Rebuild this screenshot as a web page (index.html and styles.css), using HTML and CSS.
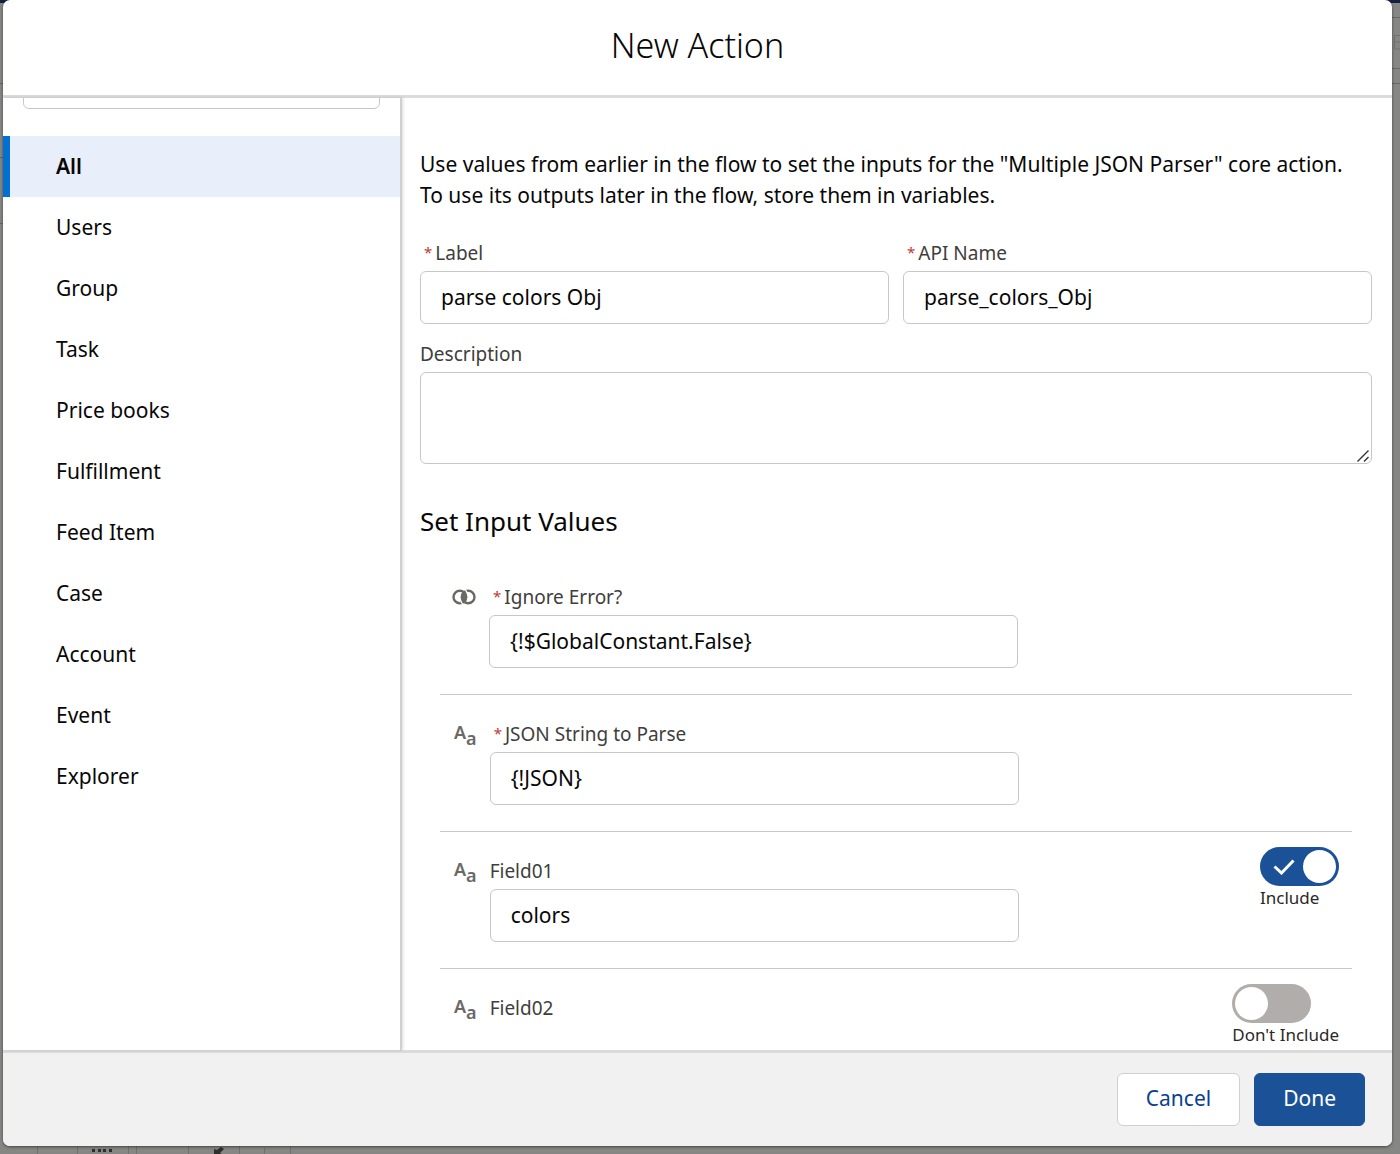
FILE: index.html
```html
<!DOCTYPE html>
<html lang="en">
<head>
    <meta charset="UTF-8">
    <meta name="viewport" content="width=device-width, initial-scale=1">
    <title>New Action</title>
    <link rel="stylesheet" href="styles.css">
</head>
<body>
    <!-- Dimmed flow builder behind the dialog -->
    <div class="backdrop" aria-hidden="true">
        <svg class="backdrop-left" width="4" height="240"><path d="M0 83.5h4M0 157.5h4M0 223.5h4" stroke="#666"/></svg>
        <svg class="backdrop-right" width="8" height="100"><path d="M0 17.5h8M0 68.5h8M0 83.5h8" stroke="#666"/><path d="M8 35.500H2.500V49H8M2.500 42H8" fill="none" stroke="#727271"/></svg>
        <svg class="backdrop-tools" width="300" height="10">
            <path d="M37.500 0v10M77.500 0v10M128.500 0v10M136.500 0v10M188.500 0v10M239.500 0v10M264.500 4v6M290.500 0v10" stroke="#707070"/>
            <path d="M92 5h3v3h-3zM98 5h3v3h-3zM103 5h3v3h-3zM109 5h3v3h-3zM214 5l3 1 4-3 3 2-4 4 2 1h-8z" fill="#2e2e2e"/>
        </svg>
    </div>

    <div class="modal" role="dialog" aria-labelledby="modalTitle">
        <header class="modal-header">
            <h1 id="modalTitle">New Action</h1>
        </header>

        <div class="modal-body">
            <aside class="sidebar">
                <div class="search">
                    <input type="text" aria-label="Search actions">
                </div>
                <nav>
                    <a class="active" href="#">All</a>
                    <a href="#">Users</a>
                    <a href="#">Group</a>
                    <a href="#">Task</a>
                    <a href="#">Price books</a>
                    <a href="#">Fulfillment</a>
                    <a href="#">Feed Item</a>
                    <a href="#">Case</a>
                    <a href="#">Account</a>
                    <a href="#">Event</a>
                    <a href="#">Explorer</a>
                </nav>
            </aside>

            <main class="content">
                <p class="intro">Use values from earlier in the flow to set the inputs for the "Multiple JSON Parser" core action.<br>To use its outputs later in the flow, store them in variables.</p>

                <div class="name-row">
                    <div class="field">
                        <label class="required" for="label">Label</label>
                        <input id="label" type="text" value="parse colors Obj" required>
                    </div>
                    <div class="field">
                        <label class="required" for="apiName">API Name</label>
                        <input id="apiName" type="text" value="parse_colors_Obj" required>
                    </div>
                </div>
                <div class="field description">
                    <label for="description">Description</label>
                    <textarea id="description"></textarea>
                    <svg class="grip" width="14" height="14"><path d="M1.500 12.500l11-11M8 12.500l4.500-4.500" stroke="#333" stroke-width="1.400" fill="none"/></svg>
                </div>

                <h2>Set Input Values</h2>

                <div class="param">
                    <svg class="type-icon" width="24" height="30" viewBox="0 0 24 30">
                        <circle cx="7.800" cy="15" r="6.300" fill="none" stroke="#6b6966" stroke-width="2.400"/>
                        <circle cx="16.200" cy="15" r="6.300" fill="none" stroke="#6b6966" stroke-width="2.400"/>
                        <path d="M12 8.800a7.500 7.500 0 0 1 0 12.400a7.500 7.500 0 0 1 0-12.400z" fill="#6b6966"/>
                        <path d="M8.700 19.300l2.600 3.700M15.300 10.700l-2.600-3.700" stroke="#fff" stroke-width="1.300"/>
                    </svg>
                    <div class="field">
                        <label class="required" for="ignoreError">Ignore Error?</label>
                        <input id="ignoreError" type="text" value="{!$GlobalConstant.False}" required>
                    </div>
                </div>
                <div class="param">
                    <span class="type-icon text-icon" aria-hidden="true"><b>A</b><b>a</b></span>
                    <div class="field">
                        <label class="required" for="jsonString">JSON String to Parse</label>
                        <input id="jsonString" type="text" value="{!JSON}" required>
                    </div>
                </div>
                <div class="param">
                    <span class="type-icon text-icon" aria-hidden="true"><b>A</b><b>a</b></span>
                    <div class="field">
                        <label for="field01">Field01</label>
                        <input id="field01" type="text" value="colors">
                    </div>
                    <label class="toggle">
                        <input type="checkbox" checked>
                        <svg class="check" width="22" height="16" viewBox="0 0 22 16"><path d="M1.500 7.500l7 6.500L20.500 1.500" fill="none" stroke="#fff" stroke-width="3"/></svg>
                        <span>Include</span>
                    </label>
                </div>
                <div class="param">
                    <span class="type-icon text-icon" aria-hidden="true"><b>A</b><b>a</b></span>
                    <div class="field">
                        <label for="toggle02">Field02</label>
                    </div>
                    <label class="toggle">
                        <input id="toggle02" type="checkbox">
                        <span>Don't Include</span>
                    </label>
                </div>
            </main>
        </div>

        <footer class="modal-footer">
            <button type="button">Cancel</button>
            <button type="button" class="brand">Done</button>
        </footer>
    </div>
</body>
</html>
```

FILE: styles.css
```css
* {
    box-sizing: border-box;
}

body {
    margin: 0;
    background-color: #868685;
    color: #080707;
    font-family: "Noto Sans", "Open Sans", sans-serif;
    font-size: 21px;
}

h1, h2, p {
    margin: 0;
}

.backdrop {
    position: absolute;
    inset: 0;
    overflow: hidden;
    border-top: 3px solid #14213f;
}

.backdrop svg {
    position: absolute;
}

.backdrop-left {
    top: -3px;
    left: 0;
}

.backdrop-right {
    top: -3px;
    right: 0;
}

.backdrop-tools {
    bottom: 0;
    left: 0;
}

.modal {
    position: relative;
    display: flex;
    flex-direction: column;
    height: calc(100vh - 8px);
    margin: 0 8px 8px 3px;
    background-color: #fff;
    border-radius: 7px;
    box-shadow: 0 1px 3px rgba(0, 0, 0, 0.5);
    overflow: hidden;
}

.modal-header {
    padding: 22px 24px 26px;
    border-bottom: 3px solid #dddbda;
    text-align: center;
}

h1 {
    font-size: 34px;
    font-weight: 300;
    line-height: 47px;
}

.modal-body {
    display: flex;
    flex: 1;
    min-height: 0;
}

/* Sidebar */

.sidebar {
    position: relative;
    flex: 0 0 399px;
    border-right: 2px solid #d0d0d0;
    box-shadow: 1px 0 3px rgba(0, 0, 0, 0.15);
    overflow: hidden;
}

.search {
    display: flex;
    align-items: flex-end;
    height: 11px;
    margin: 0 20px 27px;
    overflow: hidden;
}

nav a {
    display: block;
    padding-left: 53px;
    color: #080707;
    line-height: 61px;
    text-decoration: none;
}

nav a.active {
    padding-left: 46px;
    border-left: 7px solid #0070d2;
    background-color: #e8effb;
    font-weight: 600;
}

/* Form */

input[type="text"], textarea {
    display: block;
    flex-shrink: 0;
    width: 100%;
    height: 53px;
    padding: 0 20px 2px;
    border: 1px solid #c9c7c5;
    border-radius: 6px;
    background-color: #fff;
    color: #080707;
    font-family: inherit;
    font-size: 21px;
}

.content {
    flex: 1;
    min-width: 0;
    padding: 51px 20px 0 18px;
    overflow: hidden;
}

.intro {
    line-height: 31px;
}

.name-row {
    display: flex;
    gap: 14px;
    margin: 27px 0 15px;
}

.field {
    flex: 1;
}

.field label {
    display: block;
    margin-bottom: 3px;
    color: #3e3e3c;
    font-size: 19px;
    line-height: 30px;
}

.field .required::before {
    content: "*";
    margin: 0 3px 0 4px;
    color: #c23934;
    font-size: 15px;
    line-height: 1;
    vertical-align: 2px;
}

.description {
    position: relative;
}

textarea {
    height: 92px;
}

textarea::-webkit-resizer {
    display: none;
}

.grip {
    position: absolute;
    right: 2px;
    bottom: 1px;
    pointer-events: none;
}

h2 {
    padding: 35px 0 15px;
    font-size: 26px;
    font-weight: 400;
    line-height: 44px;
}

.param {
    display: flex;
    align-items: flex-start;
    min-height: 137px;
    margin: 0 20px;
    padding: 24px 13px 26px 12px;
    border-bottom: 1px solid #c9c7c5;
}

.param .field {
    flex: 0 1 529px;
}

.type-icon {
    flex: 0 0 24px;
    margin-right: 13px;
}

.text-icon {
    display: flex;
    padding-left: 2px;
    color: #6b6966;
    font-size: 18px;
    line-height: 26px;
}

.text-icon b {
    font-weight: 600;
}

.text-icon b + b {
    padding-top: 6px;
}

.toggle {
    position: relative;
    margin: -9px 0 0 auto;
    color: #2b2826;
    font-size: 17px;
    line-height: 24px;
}

.toggle input {
    display: block;
    width: 79px;
    height: 39px;
    margin: 0;
    padding: 3px;
    border-radius: 20px;
    background-color: #b0adab;
    appearance: none;
}

.toggle input::before {
    content: "";
    display: block;
    width: 33px;
    height: 33px;
    border-radius: 50%;
    background-color: #fff;
}

.toggle input:checked {
    background-color: #1b5297;
}

.toggle input:checked::before {
    margin-left: auto;
}

.check {
    position: absolute;
    top: 12px;
    left: 13px;
}

/* Footer */

.modal-footer {
    display: flex;
    justify-content: flex-end;
    gap: 14px;
    padding: 20px 27px;
    border-top: 3px solid #dddbda;
    background-color: #f1f1f1;
}

button {
    height: 53px;
    padding: 0 28px 3px;
    border: 1px solid #d0cfce;
    border-radius: 6px;
    background-color: #fff;
    color: #0b3f8f;
    font-family: inherit;
    font-size: 21px;
    cursor: pointer;
}

button.brand {
    border-color: #1b5297;
    background-color: #1b5297;
    color: #fff;
}
```
